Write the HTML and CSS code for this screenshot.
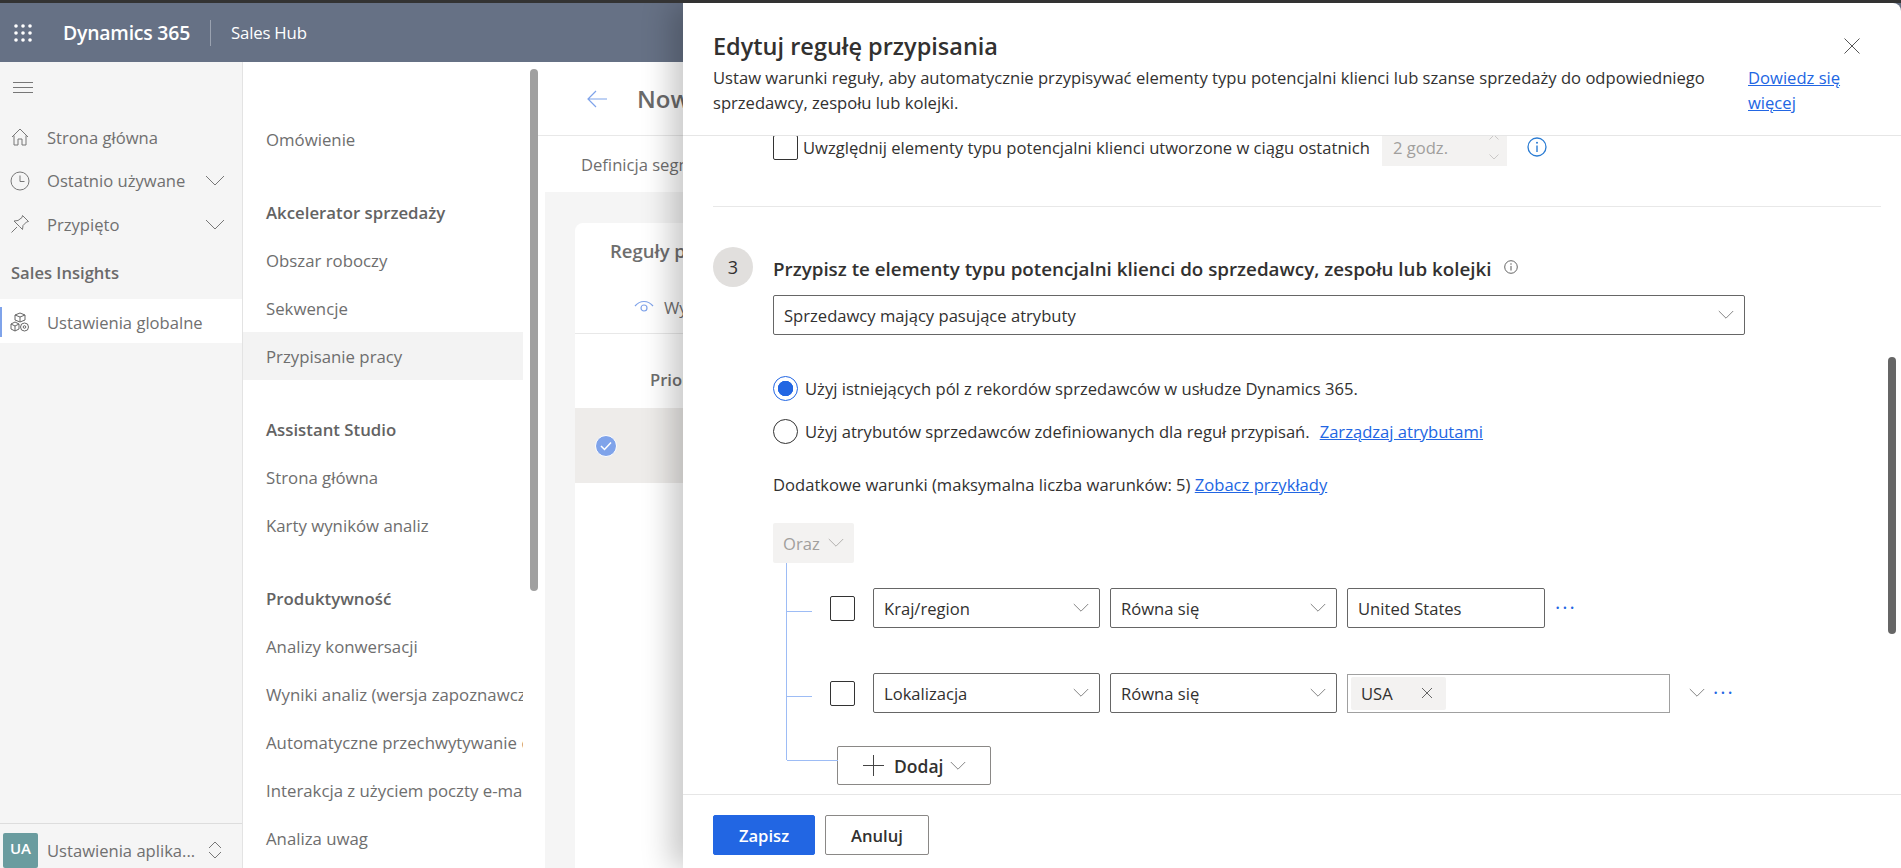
FILE: index.html
```html
<!DOCTYPE html>
<html lang="pl">
<head>
    <meta charset="UTF-8">
    <meta name="viewport" content="width=device-width, initial-scale=1.0">
    <title>Edytuj regułę przypisania</title>
    <link rel="stylesheet" href="styles.css">
</head>
<body>
    <svg class="sprite" width="0" height="0">
        <symbol id="chevron" viewBox="0 0 20 12"><path d="M1 1l9 9 9-9" fill="none" stroke="currentColor" stroke-width="1"/></symbol>
        <symbol id="info" viewBox="0 0 20 20"><circle cx="10" cy="10" r="9" fill="none" stroke="currentColor" stroke-width="1.3"/><path d="M10 8.5v6.5" stroke="currentColor" stroke-width="1.4"/><circle cx="10" cy="5.7" r="1" fill="currentColor"/></symbol>
    </svg>

    <div class="app">
        <header class="topbar">
            <svg class="waffle" width="20" height="20" viewBox="0 0 20 20" fill="#fff">
                <circle cx="3" cy="3" r="1.8"/><circle cx="10" cy="3" r="1.8"/><circle cx="17" cy="3" r="1.8"/>
                <circle cx="3" cy="10" r="1.8"/><circle cx="10" cy="10" r="1.8"/><circle cx="17" cy="10" r="1.8"/>
                <circle cx="3" cy="17" r="1.8"/><circle cx="10" cy="17" r="1.8"/><circle cx="17" cy="17" r="1.8"/>
            </svg>
            <span class="brand">Dynamics 365</span>
            <span class="app-name">Sales Hub</span>
        </header>

        <div class="main">
            <nav class="nav">
                <div class="nav-burger">
                    <svg width="20" height="12" viewBox="0 0 20 12" stroke="#777" fill="none"><path d="M0 .5h20M0 5.5h20M0 10.5h20"/></svg>
                </div>
                <div class="nav-item">
                    <svg class="nav-icon" width="20" height="20" viewBox="0 0 20 20" fill="none" stroke="#777"><path d="M2 10l8-8 8 8M4 8.5V18h4v-6h4v6h4V8.5"/></svg>
                    <span>Strona główna</span>
                </div>
                <div class="nav-item">
                    <svg class="nav-icon" width="20" height="20" viewBox="0 0 20 20" fill="none" stroke="#777"><circle cx="10" cy="10" r="9"/><path d="M10 4.5V10.5H14.5"/></svg>
                    <span>Ostatnio używane</span>
                    <svg class="nav-chevron"><use href="#chevron"/></svg>
                </div>
                <div class="nav-item">
                    <svg class="nav-icon" width="20" height="20" viewBox="0 0 20 20" fill="none" stroke="#777"><path d="M12.5 1.5l6 6-2 .5-3.500 3.500-.5 4-3-3-2.500-2.500-3-3 4-.5L12 3.500zM7 13l-5.500 5.500"/></svg>
                    <span>Przypięto</span>
                    <svg class="nav-chevron"><use href="#chevron"/></svg>
                </div>
                <div class="nav-label">Sales Insights</div>
                <div class="nav-item nav-item-active">
                    <svg class="nav-icon" width="20" height="20" viewBox="0 0 20 20" fill="none" stroke="#666"><path d="M10 1l5 2v5l-5 2-5-2V3zM5 3l5 2 5-2M10 5v5"/><path d="M5 10l4 2v5l-4 2-4-2v-5zM1 12l4 2 4-2M5 14v5"/><circle cx="14.500" cy="15" r="4"/><circle cx="14.500" cy="15" r="1.300"/></svg>
                    <span>Ustawienia globalne</span>
                </div>
                <div class="nav-foot">
                    <span class="avatar">UA</span>
                    <span class="nav-foot-text">Ustawienia aplika...</span>
                    <svg class="updown" width="14" height="18" viewBox="0 0 14 18" fill="none" stroke="#777"><path d="M1 7l6-6 6 6M1 11l6 6 6-6"/></svg>
                </div>
            </nav>

            <div class="sitemap">
                <div class="sitemap-list">
                    <div class="site-group">
                        <div class="site-item">Omówienie</div>
                    </div>
                    <div class="site-group">
                        <div class="site-head">Akcelerator sprzedaży</div>
                        <div class="site-item">Obszar roboczy</div>
                        <div class="site-item">Sekwencje</div>
                        <div class="site-item site-item-active">Przypisanie pracy</div>
                    </div>
                    <div class="site-group">
                        <div class="site-head">Assistant Studio</div>
                        <div class="site-item">Strona główna</div>
                        <div class="site-item">Karty wyników analiz</div>
                    </div>
                    <div class="site-group">
                        <div class="site-head">Produktywność</div>
                        <div class="site-item">Analizy konwersacji</div>
                        <div class="site-item">Wyniki analiz (wersja zapoznawcza)</div>
                        <div class="site-item">Automatyczne przechwytywanie danych</div>
                        <div class="site-item">Interakcja z użyciem poczty e-mail</div>
                        <div class="site-item">Analiza uwag</div>
                    </div>
                </div>
                <div class="sitemap-thumb"></div>
            </div>

            <section class="content">
                <div class="content-title">
                    <svg width="20" height="18" viewBox="0 0 20 18" fill="none" stroke="#7fa3ea" stroke-width="1.200"><path d="M9 1L1 9l8 8M1 9h19"/></svg>
                    <h1>Nowa segmentacja</h1>
                </div>
                <div class="content-tabs">Definicja segmentu</div>
                <div class="content-body">
                    <div class="card">
                        <div class="card-title">Reguły przypisania</div>
                        <div class="card-tool">
                            <svg width="20" height="14" viewBox="0 0 20 14" fill="none" stroke="#7fa3ea" stroke-width="1.200"><path d="M1 6c5-6 13-6 18 0"/><circle cx="10" cy="8" r="3"/></svg>
                            <span>Wyświetl</span>
                        </div>
                        <div class="card-cols">Priorytet</div>
                        <div class="card-row">
                            <span class="row-check">
                                <svg width="12" height="10" viewBox="0 0 12 10" fill="none" stroke="#fff" stroke-width="1.500"><path d="M1 5l3.500 3.500L11 1.500"/></svg>
                            </span>
                        </div>
                    </div>
                </div>
            </section>
        </div>

        <aside class="panel">
            <div class="panel-head">
                <div class="panel-title-row">
                    <h2>Edytuj regułę przypisania</h2>
                    <svg class="panel-close" width="16" height="16" viewBox="0 0 16 16" stroke="#555" fill="none"><path d="M.5.5l15 15M15.500.5l-15 15"/></svg>
                </div>
                <div class="panel-desc">
                    <p>Ustaw warunki reguły, aby automatycznie przypisywać elementy typu potencjalni klienci lub szanse sprzedaży do odpowiedniego sprzedawcy, zespołu lub kolejki.</p>
                    <a class="link panel-more" href="#">Dowiedz się więcej</a>
                </div>
            </div>

            <div class="panel-body">
                <div class="include-row">
                    <span class="checkbox"></span>
                    <span class="include-text">Uwzględnij elementy typu potencjalni klienci utworzone w ciągu ostatnich</span>
                    <div class="spin-input">
                        <span>2 godz.</span>
                        <span class="spin-arrows">
                            <svg class="spin-up"><use href="#chevron"/></svg>
                            <svg><use href="#chevron"/></svg>
                        </span>
                    </div>
                    <svg class="include-info" width="20" height="20"><use href="#info"/></svg>
                </div>
                <hr class="divider">

                <div class="step-head">
                    <span class="step-no">3</span>
                    <h3>Przypisz te elementy typu potencjalni klienci do sprzedawcy, zespołu lub kolejki</h3>
                    <svg class="step-info" width="14" height="14"><use href="#info"/></svg>
                </div>

                <div class="step-body">
                    <div class="select select-wide">
                        <span>Sprzedawcy mający pasujące atrybuty</span>
                        <svg class="chev"><use href="#chevron"/></svg>
                    </div>

                    <div class="radios">
                        <div class="radio-row">
                            <span class="radio radio-on"></span>
                            <span>Użyj istniejących pól z rekordów sprzedawców w usłudze Dynamics 365.</span>
                        </div>
                        <div class="radio-row">
                            <span class="radio"></span>
                            <span>Użyj atrybutów sprzedawców zdefiniowanych dla reguł przypisań.</span>
                            <a class="link radio-link" href="#">Zarządzaj atrybutami</a>
                        </div>
                    </div>

                    <div class="conditions-note">Dodatkowe warunki (maksymalna liczba warunków: 5) <a class="link" href="#">Zobacz przykłady</a></div>

                    <div class="oraz">
                        <span>Oraz</span>
                        <svg class="chev"><use href="#chevron"/></svg>
                    </div>

                    <div class="tree">
                        <div class="tree-row">
                            <span class="checkbox"></span>
                            <div class="select select-field"><span>Kraj/region</span><svg class="chev"><use href="#chevron"/></svg></div>
                            <div class="select select-field"><span>Równa się</span><svg class="chev"><use href="#chevron"/></svg></div>
                            <div class="select select-value"><span>United States</span></div>
                            <span class="dots">···</span>
                        </div>
                        <div class="tree-row">
                            <span class="checkbox"></span>
                            <div class="select select-field"><span>Lokalizacja</span><svg class="chev"><use href="#chevron"/></svg></div>
                            <div class="select select-field"><span>Równa się</span><svg class="chev"><use href="#chevron"/></svg></div>
                            <div class="tag-input">
                                <span class="tag">USA
                                    <svg width="12" height="12" viewBox="0 0 12 12" stroke="#666" fill="none"><path d="M1 1l10 10M11 1L1 11"/></svg>
                                </span>
                            </div>
                            <svg class="chev tag-chev"><use href="#chevron"/></svg>
                            <span class="dots dots-tight">···</span>
                        </div>
                        <button class="add-btn">
                            <svg width="21" height="21" viewBox="0 0 21 21" stroke="#444" fill="none"><path d="M10.500 0v21M0 10.500h21"/></svg>
                            <span>Dodaj</span>
                            <svg class="chev add-chev"><use href="#chevron"/></svg>
                        </button>
                    </div>
                </div>
                <div class="panel-thumb"></div>
            </div>

            <div class="panel-foot">
                <button class="btn btn-primary">Zapisz</button>
                <button class="btn">Anuluj</button>
            </div>
        </aside>
    </div>
</body>
</html>
```

FILE: styles.css
```css
* {
    margin: 0;
    padding: 0;
    box-sizing: border-box;
}

body {
    background: #333;
    font-family: "Open Sans", "Noto Sans", sans-serif;
    font-size: 16.600px;
    color: #323130;
    overflow: hidden;
}

.sprite {
    position: absolute;
}

.app {
    position: relative;
    height: 865px;
    margin-top: 3px;
    display: flex;
    flex-direction: column;
    overflow: hidden;
}

/* top bar */
.topbar {
    height: 59px;
    flex: none;
    background: #667185;
    color: #fff;
    display: flex;
    align-items: center;
    padding-left: 13px;
}

.brand {
    margin-left: 30px;
    font-size: 19.400px;
    font-weight: 600;
    letter-spacing: -0.2px;
}

.app-name {
    margin-left: 20px;
    padding-left: 20px;
    border-left: 1px solid #9aa2b0;
    line-height: 26px;
    font-size: 16.800px;
    letter-spacing: -0.2px;
}

.main {
    flex: 1;
    display: flex;
    min-height: 0;
    background: #fff;
}

/* left nav */
.nav {
    width: 243px;
    flex: none;
    background: #f5f5f5;
    border-right: 1px solid #e3e3e3;
    color: #707070;
    display: flex;
    flex-direction: column;
    padding-top: 4px;
}

.nav-burger {
    height: 44px;
    margin-bottom: 5px;
    padding-left: 13px;
    display: flex;
    align-items: center;
}

.nav-item {
    height: 44px;
    padding-left: 10px;
    display: flex;
    align-items: center;
    position: relative;
}

.nav-item + .nav-item {
    height: 43.500px;
}

.nav-icon {
    margin-right: 17px;
}

.nav-chevron {
    position: absolute;
    left: 205px;
    top: 16px;
    width: 20px;
    height: 12px;
    color: #777;
}

.nav-label {
    height: 50px;
    margin-bottom: 3px;
    padding: 15px 0 0 11px;
    font-weight: 600;
    color: #6a6a6a;
}

.nav-item.nav-item-active {
    height: 44px;
    padding-top: 2px;
    background: #fff;
}

.nav-item-active::before {
    content: "";
    position: absolute;
    left: 0;
    top: 8px;
    bottom: 6px;
    width: 2px;
    background: #7fa3ea;
}

.nav-foot {
    margin-top: auto;
    height: 45px;
    border-top: 1px solid #ddd;
    display: flex;
    align-items: center;
    padding: 8px 0 0 3px;
}

.avatar {
    width: 35px;
    height: 35px;
    background: #6a9c9f;
    color: #fff;
    font-size: 15px;
    font-weight: 600;
    border-radius: 2px;
    padding-bottom: 5px;
    display: flex;
    align-items: center;
    justify-content: center;
}

.nav-foot-text {
    margin-left: 9px;
    width: 161px;
    white-space: nowrap;
}

/* sitemap */
.sitemap {
    width: 295px;
    flex: none;
    position: relative;
    overflow: hidden;
}

.sitemap-list {
    width: 280px;
    padding-top: 28px;
    color: #6e6e6e;
    font-size: 16.800px;
}

.site-group {
    padding-top: 25px;
}

.site-item,
.site-head {
    height: 48px;
    line-height: 50px;
    padding-left: 23px;
    white-space: nowrap;
    overflow: hidden;
}

.site-head {
    font-weight: 600;
    color: #636363;
}

.site-item-active {
    background: #f3f3f3;
}

.sitemap-thumb {
    position: absolute;
    left: 287px;
    top: 7px;
    width: 8px;
    height: 522px;
    border-radius: 4px;
    background: #a0a0a0;
}

/* page behind the panel */
.content {
    width: 145px;
    flex: none;
    display: flex;
    flex-direction: column;
    overflow: hidden;
    color: #6e6e6e;
}

.content svg,
.content h1 {
    flex: none;
}

.content-title {
    height: 74px;
    flex: none;
    border-bottom: 1px solid #e8e8e8;
    padding-left: 49px;
    display: flex;
    align-items: center;
    gap: 30px;
}

.content-title h1 {
    font-size: 24px;
    font-weight: 600;
    white-space: nowrap;
    color: #6a6a6a;
}

.content-tabs {
    height: 56px;
    flex: none;
    line-height: 58px;
    padding-left: 43px;
    white-space: nowrap;
}

.content-body {
    flex: 1;
    margin-left: 7px;
    padding: 31px 0 0 30px;
    background: #f5f5f5;
}

.card {
    height: 100%;
    background: #fff;
    border-radius: 8px 0 0 0;
}

.card-title {
    height: 58px;
    line-height: 56px;
    padding-left: 35px;
    font-size: 18.500px;
    font-weight: 600;
    white-space: nowrap;
}

.card-tool {
    height: 53px;
    border-bottom: 1px solid #e8e8e8;
    padding-left: 59px;
    display: flex;
    align-items: center;
    gap: 10px;
    white-space: nowrap;
}

.card-cols {
    height: 74px;
    line-height: 92px;
    padding-left: 75px;
    font-weight: 600;
}

.card-row {
    height: 75px;
    background: #eeecea;
    padding-left: 20px;
    display: flex;
    align-items: center;
}

.row-check {
    width: 22px;
    height: 22px;
    border-radius: 50%;
    border: 1px solid #fff;
    background: #7fa3ea;
    display: flex;
    align-items: center;
    justify-content: center;
}

/* edit panel */
.panel {
    position: absolute;
    left: 683px;
    top: 0;
    right: 0;
    bottom: 0;
    background: #fff;
    border-top-right-radius: 8px;
    box-shadow: -12px 0 30px rgba(0, 0, 0, 0.22);
    display: flex;
    flex-direction: column;
}

.panel-head {
    height: 133px;
    flex: none;
    border-bottom: 1px solid #e6e6e6;
    padding: 27px 20px 0 30px;
}

.panel-title-row {
    display: flex;
    justify-content: space-between;
    align-items: center;
    padding-right: 21px;
}

.panel-title-row h2 {
    font-size: 23.500px;
    font-weight: 600;
    line-height: 32px;
}

.panel-desc {
    display: flex;
    line-height: 25px;
}

.panel-desc p {
    width: 1035px;
    padding-top: 3px;
}

.panel-more {
    width: 110px;
    padding-top: 3px;
}

.link {
    color: #2266e3;
    text-decoration: underline;
}

.panel-body {
    flex: 1;
    min-height: 0;
    position: relative;
    overflow: hidden;
    padding: 0 20px 0 30px;
}

.include-row {
    margin: -8px 0 0 60px;
    height: 38px;
    display: flex;
    align-items: center;
}

.checkbox {
    width: 25px;
    height: 25px;
    flex: none;
    border: 1px solid #333;
    border-radius: 2px;
}

.include-text {
    margin-left: 5px;
    white-space: nowrap;
}

.spin-input {
    margin-left: 12px;
    width: 125px;
    height: 37px;
    background: #f3f2f1;
    color: #a19f9d;
    padding: 0 8px 0 11px;
    display: flex;
    align-items: center;
    justify-content: space-between;
}

.spin-arrows {
    display: flex;
    flex-direction: column;
    gap: 14px;
}

.spin-arrows svg {
    display: block;
    width: 10px;
    height: 6px;
    color: #a19f9d;
}

.spin-up {
    transform: scaleY(-1);
}

.include-info {
    margin-left: 20px;
    color: #2b7cd3;
}

.divider {
    border: none;
    border-top: 1px solid #e8e8e8;
    margin-top: 40px;
}

.step-head {
    margin-top: 40px;
    height: 40px;
    display: flex;
    align-items: center;
}

.step-no {
    width: 40px;
    height: 40px;
    border-radius: 50%;
    background: #e1dfdd;
    font-size: 18px;
    display: flex;
    align-items: center;
    justify-content: center;
}

.step-head h3 {
    margin-left: 20px;
    padding-top: 3px;
    font-size: 18.800px;
    font-weight: 600;
    white-space: nowrap;
}

.step-info {
    margin-left: 12px;
    color: #555;
}

.step-body {
    margin-left: 60px;
}

.select {
    height: 40px;
    border: 1px solid #666;
    border-radius: 2px;
    padding: 0 10px;
    display: flex;
    align-items: center;
    justify-content: space-between;
    white-space: nowrap;
}

.select-wide {
    margin-top: 8px;
    width: 972px;
}

.chev {
    width: 16px;
    height: 10px;
    flex: none;
    color: #666;
}

.radios {
    margin-top: 41px;
    display: flex;
    flex-direction: column;
    gap: 18px;
}

.radio-row {
    height: 25px;
    display: flex;
    align-items: center;
}

.radio {
    width: 25px;
    height: 25px;
    margin-right: 7px;
    border: 1px solid #333;
    border-radius: 50%;
    flex: none;
}

.radio-on {
    border-color: #2266e3;
    background: radial-gradient(circle, #2266e3 0 7.500px, #fff 8px);
}

.radio-link {
    margin-left: 10px;
}

.conditions-note {
    margin-top: 30px;
    line-height: 22px;
}

.oraz {
    margin-top: 27px;
    width: 81px;
    height: 40px;
    border-radius: 2px;
    background: #f3f2f1;
    color: #a19f9d;
    padding: 0 10px;
    display: flex;
    align-items: center;
    justify-content: space-between;
}

.oraz .chev {
    color: #a19f9d;
}

/* condition tree */
.tree {
    position: relative;
    padding: 25px 0 0 57px;
}

.tree::before {
    content: "";
    position: absolute;
    left: 13px;
    top: 0;
    bottom: 25px;
    width: 1px;
    background: #9dbcf5;
}

.tree-row {
    position: relative;
    height: 40px;
    margin-bottom: 45px;
    display: flex;
    align-items: center;
    gap: 10px;
}

.tree-row::before {
    content: "";
    position: absolute;
    left: -43px;
    top: 23px;
    width: 25px;
    height: 1px;
    background: #9dbcf5;
}

.tree-row .checkbox {
    margin-right: 8px;
}

.select-field {
    width: 227px;
}

.select-value {
    width: 198px;
}

.dots {
    color: #2266e3;
    font-size: 20px;
    font-weight: 400;
    line-height: 24px;
    letter-spacing: 2px;
}

.dots-tight {
    margin-left: -2px;
}

.tag-input {
    width: 323px;
    height: 39px;
    border: 1px solid #a0a0a0;
    padding: 2px 3px;
}

.tag {
    width: 95px;
    height: 33px;
    background: #f3f2f1;
    border-radius: 2px;
    padding: 0 13px 0 10px;
    display: flex;
    align-items: center;
    justify-content: space-between;
}

.tag-chev {
    margin-left: 9px;
}

.add-btn {
    position: relative;
    margin: -12px 0 0 7px;
    width: 154px;
    height: 39px;
    background: #fff;
    border: 1px solid #8a8886;
    border-radius: 2px;
    font: inherit;
    font-size: 17.500px;
    font-weight: 600;
    color: #323130;
    display: flex;
    align-items: center;
    padding-left: 25px;
    gap: 10px;
}

.add-chev {
    margin-left: -3px;
}

.add-btn::before {
    content: "";
    position: absolute;
    left: -51px;
    top: 13px;
    width: 51px;
    height: 1px;
    background: #9dbcf5;
}

.panel-thumb {
    position: absolute;
    right: 5px;
    top: 221px;
    width: 8px;
    height: 277px;
    border-radius: 4px;
    background: #666;
}

.panel-foot {
    height: 74px;
    flex: none;
    border-top: 1px solid #e6e6e6;
    padding: 20px 0 0 30px;
    display: flex;
    align-items: flex-start;
    gap: 10px;
}

.btn {
    width: 104px;
    height: 40px;
    background: #fff;
    border: 1px solid #8a8886;
    border-radius: 2px;
    font: inherit;
    font-weight: 600;
    color: #323130;
}

.btn-primary {
    width: 102px;
    background: #2266e3;
    border-color: #2266e3;
    color: #fff;
}
```
